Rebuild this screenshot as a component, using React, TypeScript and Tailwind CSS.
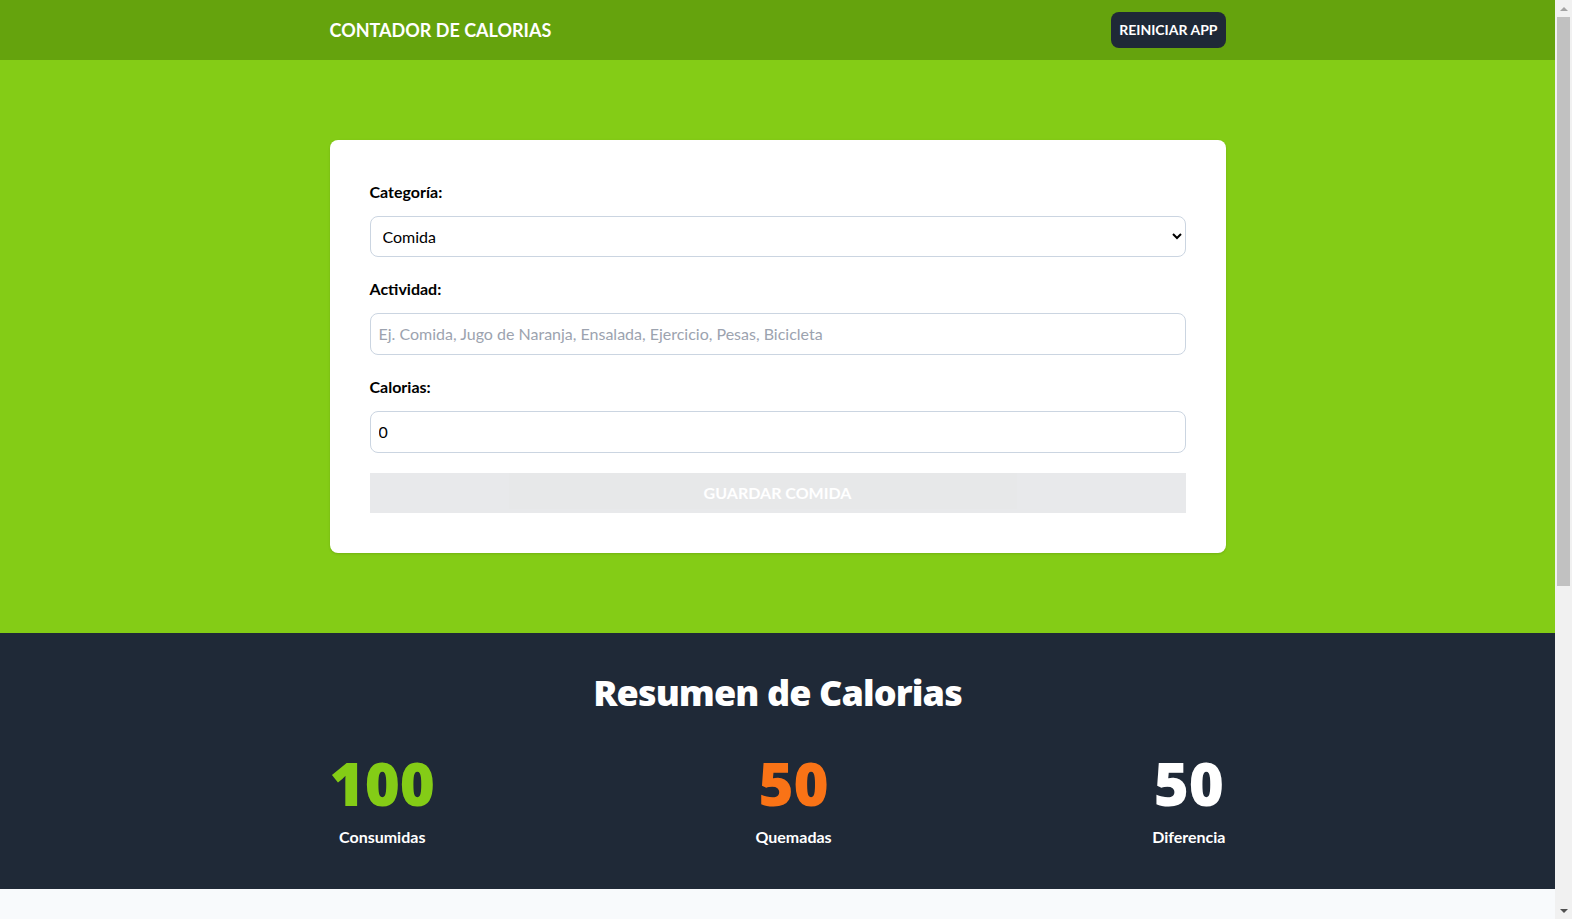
import { useState } from "react";

const categories = [
  { id: 1, name: "Comida" },
  { id: 2, name: "Ejercicio" },
];

export default function App() {
  const [category, setCategory] = useState(1);
  const [name, setName] = useState("");
  const [calories, setCalories] = useState(0);

  const isValid = name.trim() !== "" && calories > 0;

  return (
    <div className="h-screen flex bg-[#f8fafc] text-black font-['Lato',sans-serif]">
      <main className="flex-1 overflow-y-auto">
        <header className="bg-[#65a30d] py-3">
          <div className="max-w-4xl mx-auto flex justify-between items-center">
            <h1 className="text-center text-lg font-bold text-white uppercase">Contador de Calorias</h1>
            <button className="bg-[#1f2937] hover:bg-[#111827] p-2 font-bold uppercase text-white cursor-pointer rounded-lg text-sm">
              Reiniciar App
            </button>
          </div>
        </header>

        <section className="bg-[#84cc16] py-20 px-5">
          <div className="max-w-4xl mx-auto">
            <form className="space-y-5 bg-white shadow p-10 rounded-lg" onSubmit={(e) => e.preventDefault()}>
              <div className="grid grid-cols-1 gap-3">
                <label htmlFor="category" className="font-bold">Categoría:</label>
                <select
                  id="category"
                  className="border border-[#cbd5e1] h-[41px] px-2 rounded-lg w-full bg-white"
                  value={category}
                  onChange={(e) => setCategory(+e.target.value)}
                >
                  {categories.map((c) => (
                    <option key={c.id} value={c.id}>{c.name}</option>
                  ))}
                </select>
              </div>

              <div className="grid grid-cols-1 gap-3">
                <label htmlFor="name" className="font-bold">Actividad:</label>
                <input
                  id="name"
                  type="text"
                  className="border border-[#cbd5e1] p-2 rounded-lg placeholder:text-[#9ca3af]"
                  placeholder="Ej. Comida, Jugo de Naranja, Ensalada, Ejercicio, Pesas, Bicicleta"
                  value={name}
                  onChange={(e) => setName(e.target.value)}
                />
              </div>

              <div className="grid grid-cols-1 gap-3">
                <label htmlFor="calories" className="font-bold">Calorias:</label>
                <input
                  id="calories"
                  type="number"
                  className="border border-[#cbd5e1] p-2 rounded-lg"
                  placeholder="Calorias. ej. 300 o 500"
                  value={calories}
                  onChange={(e) => setCalories(+e.target.value)}
                />
              </div>

              <input
                type="submit"
                className="bg-[#1f2937] hover:bg-[#111827] w-full p-2 font-bold uppercase text-white cursor-pointer disabled:opacity-10"
                value={category === 1 ? "Guardar Comida" : "Guardar Ejercicio"}
                disabled={!isValid}
              />
            </form>
          </div>
        </section>

        <section className="bg-[#1f2937] py-10">
          <div className="max-w-4xl mx-auto">
            <h2 className="text-4xl font-extrabold tracking-tight text-white text-center font-['Open_Sans',sans-serif]">Resumen de Calorias</h2>
            <div className="flex flex-col items-center md:flex-row md:justify-between gap-5 mt-10">
              <CalorieDisplay calories={100} text="Consumidas" color="text-[#84cc16]" />
              <CalorieDisplay calories={50} text="Quemadas" color="text-[#f97316]" />
              <CalorieDisplay calories={50} text="Diferencia" color="text-white" />
            </div>
          </div>
        </section>

        <section className="p-10 mx-auto max-w-4xl">
          <h2 className="text-4xl font-bold text-[#475569] text-center">Comida y Actividades</h2>
          <p className="text-center my-5">No hay actividades aún...</p>
        </section>
      </main>

      {/* window scrollbar as seen in the capture */}
      <aside className="w-[17px] shrink-0 bg-[#f1f1f1] flex flex-col items-center">
        <div className="h-[17px] flex items-center justify-center">
          <div className="w-0 h-0 border-x-[4px] border-x-transparent border-b-[4px] border-b-[#a3a3a3]" />
        </div>
        <div className="w-[13px] h-[569px] bg-[#c1c1c1]" />
        <div className="flex-1" />
        <div className="h-[17px] flex items-center justify-center">
          <div className="w-0 h-0 border-x-[4px] border-x-transparent border-t-[4px] border-t-[#505050]" />
        </div>
      </aside>
    </div>
  );
}

const CalorieDisplay = ({ calories, text, color }: { calories: number; text: string; color: string }) => (
  <p className="text-white font-bold rounded-full grid grid-cols-1 gap-3 text-center">
    <span className={`font-extrabold text-6xl font-['Open_Sans',sans-serif] ${color}`}>{calories}</span>
    {text}
  </p>
);
